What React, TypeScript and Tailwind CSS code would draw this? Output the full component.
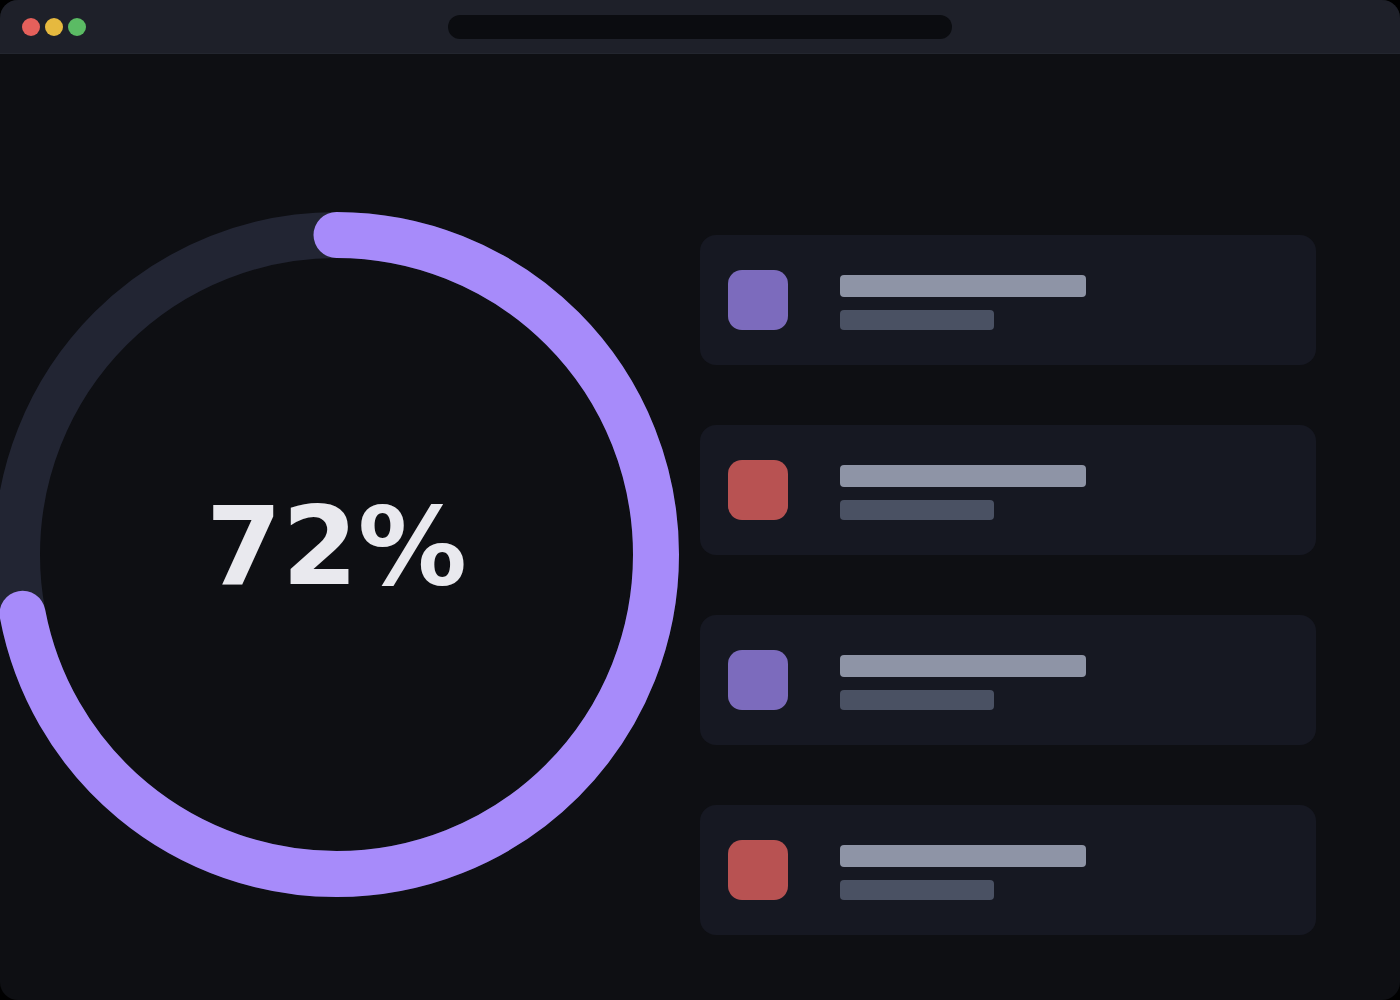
import React from "react";

const rows = [
  { color: "bg-[#7c6bbd]" },
  { color: "bg-[#b85252]" },
  { color: "bg-[#7c6bbd]" },
  { color: "bg-[#b85252]" },
];

function Ring({ value }: { value: number }) {
  const r = 319.5;
  const c = 2 * Math.PI * r;
  return (
    <div className="relative ml-[-6px] mt-[158px] h-[685px] w-[685px] shrink-0">
      <svg width="685" height="685" viewBox="0 0 685 685" className="block">
        <circle cx="342.5" cy="342.5" r={r} fill="none" stroke="#222533" strokeWidth="46" />
        <circle
          cx="342.5"
          cy="342.5"
          r={r}
          fill="none"
          stroke="#a78bfa"
          strokeWidth="46"
          strokeLinecap="round"
          strokeDasharray={`${(c * value) / 100} ${c}`}
          transform="rotate(-90 342.5 342.5)"
        />
      </svg>
      <div className="absolute inset-0 flex items-center justify-center pb-[16px]">
        <span className="font-['DejaVu_Sans',sans-serif] text-[109px] font-bold leading-none text-[#e9e9ee]">
          {value}%
        </span>
      </div>
    </div>
  );
}

export default function App() {
  return (
    <div className="h-[1000px] w-[1400px] bg-black">
      <div className="flex h-full w-full flex-col overflow-hidden rounded-[18px] bg-[#0e0f13]">
        {/* window chrome */}
        <div className="relative flex h-[54px] shrink-0 items-center border-b border-[#23262f] bg-[#1e2029] px-[22px]">
          <div className="flex gap-[5px]">
            <span className="h-[18px] w-[18px] rounded-full bg-[#e5605b]" />
            <span className="h-[18px] w-[18px] rounded-full bg-[#e6b93f]" />
            <span className="h-[18px] w-[18px] rounded-full bg-[#5bbb64]" />
          </div>
          <div className="ml-[362px] h-[24px] w-[504px] rounded-full bg-[#0b0c10]" />
        </div>

        <div className="flex flex-1">
          <Ring value={72} />

          <div className="ml-[21px] mt-[181px] flex w-[616px] flex-col gap-[60px]">
            {rows.map((row, i) => (
              <div key={i} className="flex h-[130px] items-center rounded-[16px] bg-[#161822] px-[28px]">
                <div className={`h-[60px] w-[60px] rounded-[14px] ${row.color}`} />
                <div className="ml-[52px] mt-[5px] flex flex-col gap-[13px]">
                  <div className="h-[22px] w-[246px] rounded-[4px] bg-[#8e94a6]" />
                  <div className="h-[20px] w-[154px] rounded-[4px] bg-[#4a5163]" />
                </div>
              </div>
            ))}
          </div>
        </div>
      </div>
    </div>
  );
}
